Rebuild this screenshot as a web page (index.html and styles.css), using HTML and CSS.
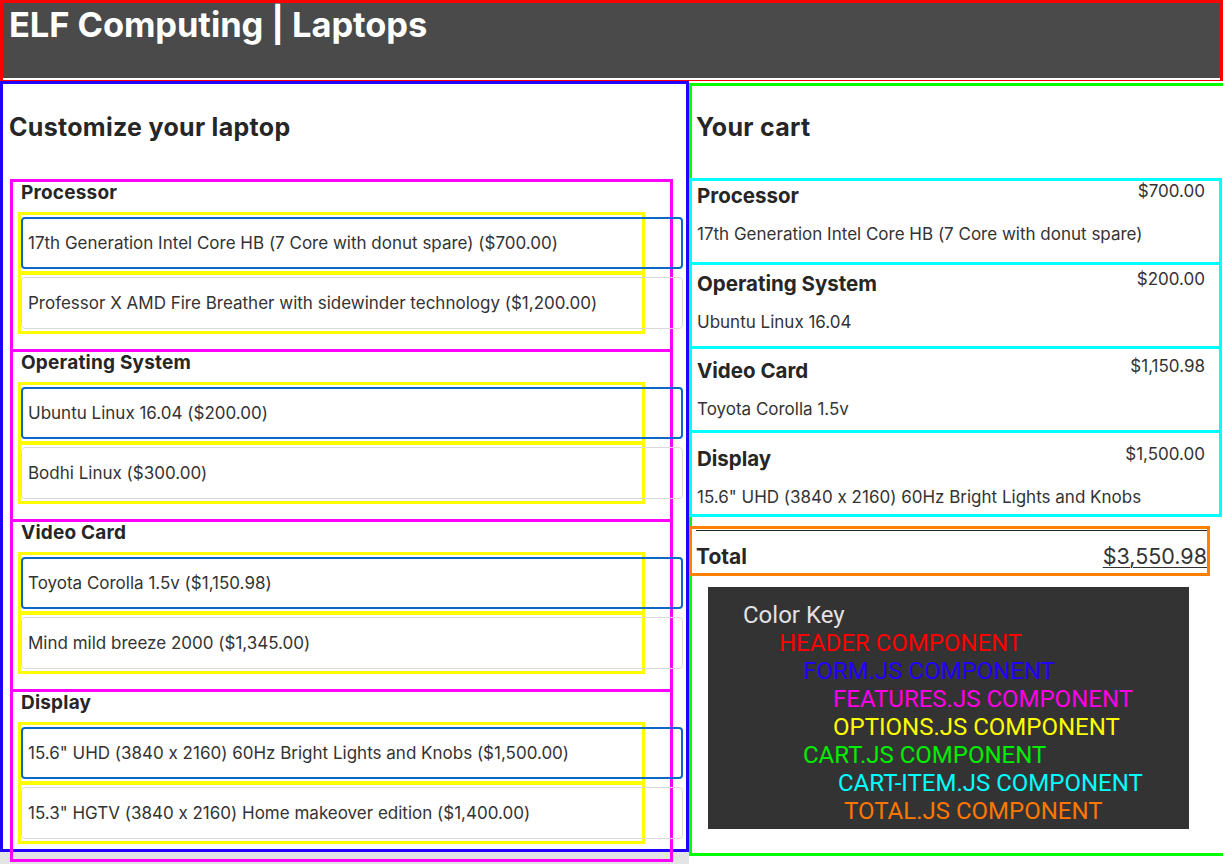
FILE: index.html
```html
<!DOCTYPE html>
<html lang="en">
<head>
<meta charset="utf-8">
<title>ELF Computing | Laptops</title>
<link rel="stylesheet" href="styles.css">
</head>
<body>
<header class="site-header">
  <h1 class="site-title">ELF Computing | Laptops</h1>
</header>
<main class="layout">
  <div class="form-col">
    <form class="config">
      <h2 class="section-title">Customize your laptop</h2>

      <div class="feature">
        <h3 class="feature-name">Processor</h3>
        <div class="option-wrap"><div class="option selected">17th Generation Intel Core HB (7 Core with donut spare) ($700.00)</div></div>
        <div class="option-wrap"><div class="option">Professor X AMD Fire Breather with sidewinder technology ($1,200.00)</div></div>
      </div>

      <div class="feature">
        <h3 class="feature-name">Operating System</h3>
        <div class="option-wrap"><div class="option selected">Ubuntu Linux 16.04 ($200.00)</div></div>
        <div class="option-wrap"><div class="option">Bodhi Linux ($300.00)</div></div>
      </div>

      <div class="feature">
        <h3 class="feature-name">Video Card</h3>
        <div class="option-wrap"><div class="option selected">Toyota Corolla 1.5v ($1,150.98)</div></div>
        <div class="option-wrap"><div class="option">Mind mild breeze 2000 ($1,345.00)</div></div>
      </div>

      <div class="feature">
        <h3 class="feature-name">Display</h3>
        <div class="option-wrap"><div class="option selected">15.6" UHD (3840 x 2160) 60Hz Bright Lights and Knobs ($1,500.00)</div></div>
        <div class="option-wrap"><div class="option">15.3" HGTV (3840 x 2160) Home makeover edition ($1,400.00)</div></div>
      </div>
    </form>
  </div>

  <div class="cart-col">
    <section class="cart">
      <h2 class="section-title cart-title">Your cart</h2>

      <div class="cart-item">
        <div class="item-head"><span class="item-name">Processor</span><span class="item-price">$700.00</span></div>
        <div class="item-desc">17th Generation Intel Core HB (7 Core with donut spare)</div>
      </div>
      <div class="cart-item">
        <div class="item-head"><span class="item-name">Operating System</span><span class="item-price">$200.00</span></div>
        <div class="item-desc">Ubuntu Linux 16.04</div>
      </div>
      <div class="cart-item">
        <div class="item-head"><span class="item-name">Video Card</span><span class="item-price">$1,150.98</span></div>
        <div class="item-desc">Toyota Corolla 1.5v</div>
      </div>
      <div class="cart-item">
        <div class="item-head"><span class="item-name">Display</span><span class="item-price">$1,500.00</span></div>
        <div class="item-desc">15.6" UHD (3840 x 2160) 60Hz Bright Lights and Knobs</div>
      </div>

      <div class="total">
        <div class="total-row">
          <span class="total-label">Total</span>
          <span class="total-amount">$3,550.98</span>
        </div>
      </div>

      <div class="key">
        <div class="key-line key-title">Color Key</div>
        <div class="key-line key-header">HEADER COMPONENT</div>
        <div class="key-line key-form">FORM.JS COMPONENT</div>
        <div class="key-line key-features">FEATURES.JS COMPONENT</div>
        <div class="key-line key-options">OPTIONS.JS COMPONENT</div>
        <div class="key-line key-cart">CART.JS COMPONENT</div>
        <div class="key-line key-item">CART-ITEM.JS COMPONENT</div>
        <div class="key-line key-total">TOTAL.JS COMPONENT</div>
      </div>
    </section>
  </div>
</main>
</body>
</html>
```

FILE: styles.css
```css
* { box-sizing: border-box; }

html, body {
  margin: 0;
  padding: 0;
}

body {
  font-family: Inter, "Noto Sans", "Liberation Sans", sans-serif;
  font-feature-settings: "calt" 0;
  color: #2b2b2b;
  background: #ffffff;
}

/* Header */
.site-header {
  height: 83px;
  border: 3px solid #ff0000;
  background: #4a4a4a;
  box-shadow: inset 0 -2px 0 #ffffff;
  padding: 2px 6px 0;
}

.site-title {
  margin: 0;
  font-size: 34.5px;
  line-height: 40px;
  font-weight: 700;
  color: #ffffff;
  letter-spacing: -0.1px;
}

/* Layout */
.layout {
  display: flex;
  align-items: stretch;
  margin-top: -2px;
  min-height: 783px;
}

.form-col {
  width: 689px;
  flex: none;
  background: #e4e4e4;
}

.config {
  height: 771px;
  border: 3px solid #2200ff;
  background: #ffffff;
  margin: 0;
  padding: 0;
}

.section-title {
  margin: 29px 0 0 6px;
  font-size: 25px;
  line-height: 29px;
  font-weight: 700;
  color: #262626;
  letter-spacing: 0.3px;
}

/* Features */
.feature {
  height: 173px;
  width: 663px;
  margin: 0 0 -3px 7px;
  border: 3px solid #ff00ff;
  padding: 0 0 0 5px;
}

.feature:first-of-type {
  margin-top: 37px;
}

.feature-name {
  margin: 0;
  padding: 0 0 0 3px;
  font-size: 19px;
  line-height: 22px;
  font-weight: 700;
  color: #262626;
  letter-spacing: 0.2px;
}

.option-wrap {
  width: 627px;
  height: 62px;
  border: 3px solid #ffff00;
  margin-bottom: -2px;
  padding-top: 2px;
}

.feature-name + .option-wrap {
  margin-top: 8px;
}

.option {
  width: 662px;
  height: 52px;
  display: flex;
  align-items: center;
  border: 1px solid #d9d9d9;
  border-radius: 4px;
  padding: 0 6px;
  font-size: 17px;
  color: #333333;
  white-space: nowrap;
}

.option.selected {
  border: 2px solid #0b69c6;
  padding: 0 5px;
}

/* Cart */
.cart-col {
  flex: 1;
  padding-top: 2px;
  background: #ffffff;
}

.cart {
  height: 773px;
  border: 3px solid #00ff00;
  padding: 0 1px 0 4px;
}

.cart-title {
  margin: 27px 0 0 0;
}

.cart-item {
  width: 533px;
  height: 87px;
  margin: 0 0 -3px -7px;
  border: 3px solid #00ffff;
  padding: 3px 14px 0 5px;
}

.cart-title + .cart-item {
  margin-top: 36px;
}

.cart-item:nth-of-type(2) { padding-top: 7px; }
.cart-item:nth-of-type(3) { padding-top: 10px; }
.cart-item:nth-of-type(4) { padding-top: 14px; }

.item-head {
  display: flex;
  justify-content: space-between;
  align-items: flex-start;
}

.item-name {
  font-size: 20.5px;
  line-height: 24px;
  font-weight: 700;
  color: #262626;
}

.item-price {
  font-size: 17px;
  line-height: 20px;
  margin-top: -3px;
  color: #333333;
}

.item-desc {
  margin-top: 16px;
  font-size: 17px;
  line-height: 20px;
  color: #333333;
  white-space: nowrap;
}

/* Total */
.total {
  width: 521px;
  height: 50px;
  margin: 12px 0 0 -7px;
  border: 3px solid #ff7f00;
  padding: 1px 0 0 4px;
}

.total-row {
  border-top: 1px solid #222222;
  display: flex;
  justify-content: space-between;
  align-items: baseline;
  padding-top: 13px;
}

.total-label {
  font-size: 21px;
  line-height: 24px;
  font-weight: 700;
  color: #262626;
}

.total-amount {
  font-size: 21.5px;
  line-height: 24px;
  color: #333333;
  text-decoration: underline;
  text-decoration-thickness: 1px;
  text-underline-offset: 3px;
}

/* Color key */
.key {
  width: 481px;
  margin: 11px 0 0 12px;
  background: #333333;
  padding: 14px 0 4px 35px;
  font-family: Roboto, "Liberation Sans", sans-serif;
  font-size: 24px;
  line-height: 28px;
}

.key-title { color: #e2e2e2; }
.key-header { color: #ff0000; padding-left: 36px; }
.key-form { color: #2200ff; padding-left: 60px; }
.key-features { color: #ff00e6; padding-left: 90px; }
.key-options { color: #ffff00; padding-left: 90px; }
.key-cart { color: #00ee00; padding-left: 60px; }
.key-item { color: #00ffff; padding-left: 95px; }
.key-total { color: #ff7700; padding-left: 101px; }
```
